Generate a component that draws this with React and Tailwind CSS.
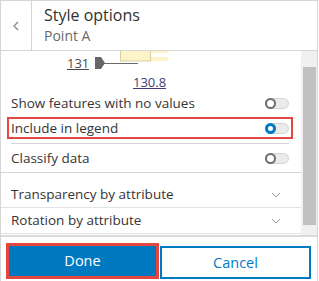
import React from "react";

function Toggle({ on }) {
  return (
    <div className="relative w-[24px] h-[11px] rounded-full bg-[#ebebeb] border border-[#d4d4d4]">
      <div
        className={
          on
            ? "absolute left-[-1px] top-[-1px] w-[11px] h-[11px] rounded-full bg-white border-[3px] border-[#007ac2]"
            : "absolute left-[-1px] top-[-1px] w-[11px] h-[11px] rounded-full bg-white border-2 border-[#6e6e6e]"
        }
      />
    </div>
  );
}

function Chevron() {
  return (
    <svg width="10" height="6" viewBox="0 0 10 6" fill="none">
      <path d="M1 1 L5 5 L9 1" stroke="#9a9a9a" strokeWidth="1" />
    </svg>
  );
}

export default function App() {
  return (
    <div
      className="w-[318px] h-[281px] bg-white border-l border-t border-r border-[#d6d6d6] flex flex-col text-[#353535] overflow-hidden"
      style={{ fontFamily: '"Open Sans", sans-serif' }}
    >
      {/* Header */}
      <div className="h-[50px] flex border-b border-[#d6d6d6] shrink-0">
        <div className="w-[31px] border-r border-[#d6d6d6] flex items-center justify-center">
          <svg width="6" height="10" viewBox="0 0 6 10" fill="none">
            <path d="M5 1 L1 5 L5 9" stroke="#8a8a8a" strokeWidth="1.3" />
          </svg>
        </div>
        <div className="pl-[12px] pt-[3px] flex flex-col">
          <div className="text-[16px] leading-[22px] text-[#323232]">Style options</div>
          <div className="text-[14px] leading-[20px] text-[#6a6a6a]">Point A</div>
        </div>
      </div>

      {/* Content */}
      <div className="h-[184px] flex shrink-0">
        <div className="flex-1 flex flex-col overflow-hidden">
          {/* chart (partially scrolled) */}
          <div className="h-[40px] shrink-0">
            <svg width="300" height="40" viewBox="0 0 300 40">
              <rect x="119.5" y="-2" width="30" height="12" fill="#fdf3c9" stroke="#d9cf9a" strokeWidth="1" />
              <rect x="150" y="0" width="17" height="2" fill="#fdf3c9" />
              <rect x="150" y="6" width="17" height="4" fill="#fdf3c9" />
              <line x1="103" y1="12.5" x2="137" y2="12.5" stroke="#6a6a6a" strokeWidth="1" />
              <path d="M94 6 L100 6 L104 12 L100 18 L94 18 Z" fill="#666666" />
              <text x="66" y="17" fontSize="13" fill="#4a4a4a" fontFamily="Open Sans, sans-serif">131</text>
              <line x1="66" y1="18.5" x2="88" y2="18.5" stroke="#4a4a4a" strokeWidth="1" />
              <text x="132" y="36" fontSize="13" fill="#3f3f7a" fontFamily="Open Sans, sans-serif">130.8</text>
              <line x1="132" y1="37.5" x2="165" y2="37.5" stroke="#3f3f7a" strokeWidth="1" />
            </svg>
          </div>
          {/* row 1 */}
          <div className="h-[25px] shrink-0 flex items-center justify-between pl-[10px] pr-[12px]">
            <span className="text-[13.5px]">Show features with no values</span>
            <Toggle on={false} />
          </div>
          {/* row 2 highlighted */}
          <div className="h-[22px] shrink-0 ml-[6px] mr-[8px] mt-[1px] border-2 border-[#e5473f] flex items-center justify-between pl-[2px] pr-[2px]">
            <span className="text-[13.5px]">Include in legend</span>
            <Toggle on={true} />
          </div>
          <div className="h-[1px] shrink-0 mt-[4px] ml-[10px] mr-[12px] bg-[#d6d6d6]" />
          <div className="h-[28px] shrink-0 flex items-center justify-between pl-[10px] pr-[12px]">
            <span className="text-[13.5px]">Classify data</span>
            <Toggle on={false} />
          </div>
          <div className="h-[1px] shrink-0 bg-[#d6d6d6]" />
          <div className="h-[35px] shrink-0 flex items-end pb-[3px] justify-between pl-[10px] pr-[20px] border-b border-[#e2e2e2]">
            <span className="text-[13.5px] leading-[20px]">Transparency by attribute</span>
            <div className="pb-[6px]"><Chevron /></div>
          </div>
          <div className="h-[26px] shrink-0 flex items-center justify-between pl-[10px] pr-[20px] border-b border-[#e2e2e2]">
            <span className="text-[13.5px]">Rotation by attribute</span>
            <Chevron />
          </div>
        </div>
        {/* scrollbar */}
        <div className="w-[16px] bg-[#f0f0f0] shrink-0 pt-[16px] pl-[2px] pr-[1px]">
          <div className="h-[158px] bg-[#c1c1c1]" />
        </div>
      </div>

      {/* Footer */}
      <div className="flex-1 border-t-2 border-[#dadada] flex items-start pt-[6px] pl-[5px] pr-[6px]">
        <div className="w-[153px] h-[36px] border-[3px] border-[#e5473f] shrink-0">
          <button className="w-full h-full bg-[#0079c1] text-white text-[14.5px] flex items-center justify-center">
            Done
          </button>
        </div>
        <button className="ml-[1px] mt-[3px] w-[151px] h-[33px] border-2 border-[#007ac2] text-[#007ac2] text-[14.5px] flex items-center justify-center">
          Cancel
        </button>
      </div>
    </div>
  );
}
